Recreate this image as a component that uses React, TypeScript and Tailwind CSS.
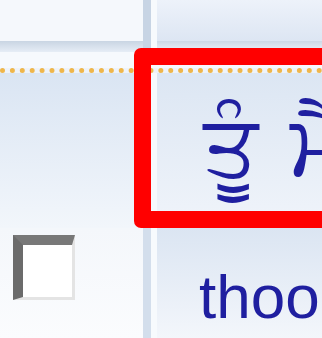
export default function App() {
  return (
    <div className="relative w-[322px] h-[338px] overflow-hidden bg-[#eef3fa] font-['Liberation_Sans',sans-serif]">
      {/* top header row */}
      <div className="flex h-[52px]">
        <div className="w-[143px] shrink-0 flex flex-col">
          <div className="h-[41px] bg-[#f5f8fc]" />
          <div className="h-[11px] bg-gradient-to-b from-[#c9d5e3] to-[#e6edf6]" />
        </div>
        <div className="w-[8px] shrink-0 bg-[#c7d4e4]" />
        <div className="w-[6px] shrink-0 bg-[#f7fafd]" />
        <div className="flex-1 min-w-0 flex flex-col">
          <div className="h-[41px] bg-gradient-to-b from-[#edf2fa] to-[#dde6f3]" />
          <div className="h-[11px] bg-gradient-to-b from-[#cdd8e6] to-[#eef3fa]" />
        </div>
      </div>

      {/* dotted line row */}
      <div className="h-[16px] bg-[#f6f9fd]" />
      <div className="h-[5px] border-t-[5px] border-dotted border-[#efb64a]" />

      {/* content row */}
      <div className="flex h-[155px]">
        <div className="w-[143px] shrink-0 bg-gradient-to-b from-[#dae5f3] to-[#f2f6fb]" />
        <div className="w-[8px] shrink-0 bg-[#d3deec]" />
        <div className="w-[6px] shrink-0 bg-[#f7fafd]" />
        <div className="flex-1 min-w-0 overflow-hidden bg-gradient-to-b from-[#dce6f3] to-[#f0f4fa] pl-[46px] pt-[26px] flex items-start text-[86px] leading-none text-[#1f1fa0] font-['Noto_Sans',sans-serif] whitespace-nowrap">
          <span>ਤੂੰ</span>
          <span className="ml-[32px]">ਮੈ</span>
        </div>
      </div>

      {/* bottom row */}
      <div className="flex h-[110px]">
        <div className="w-[143px] shrink-0 bg-gradient-to-b from-[#f4f7fb] to-[#fbfcfe] pl-[13px] pt-[7px]">
          <div className="w-[62px] h-[65px] bg-white border-l-[10px] border-t-[10px] border-r-[3px] border-b-[3px] border-l-[#6b6b6b] border-t-[#787878] border-r-[#e4e4e4] border-b-[#e4e4e4]" />
        </div>
        <div className="w-[8px] shrink-0 bg-[#d3deec]" />
        <div className="w-[6px] shrink-0 bg-[#f7fafd]" />
        <div className="flex-1 min-w-0 overflow-hidden bg-gradient-to-b from-[#dbe5f2] to-[#f3f6fb] pl-[42px] pt-[38px]">
          <span className="text-[62px] leading-none text-[#1f1fa0] whitespace-nowrap">thoor</span>
        </div>
      </div>

      {/* red highlight box */}
      <div className="absolute left-[134px] top-[48px] w-[220px] h-[180px] border-[17px] border-[#ff0000] rounded-[7px]" />
    </div>
  );
}
